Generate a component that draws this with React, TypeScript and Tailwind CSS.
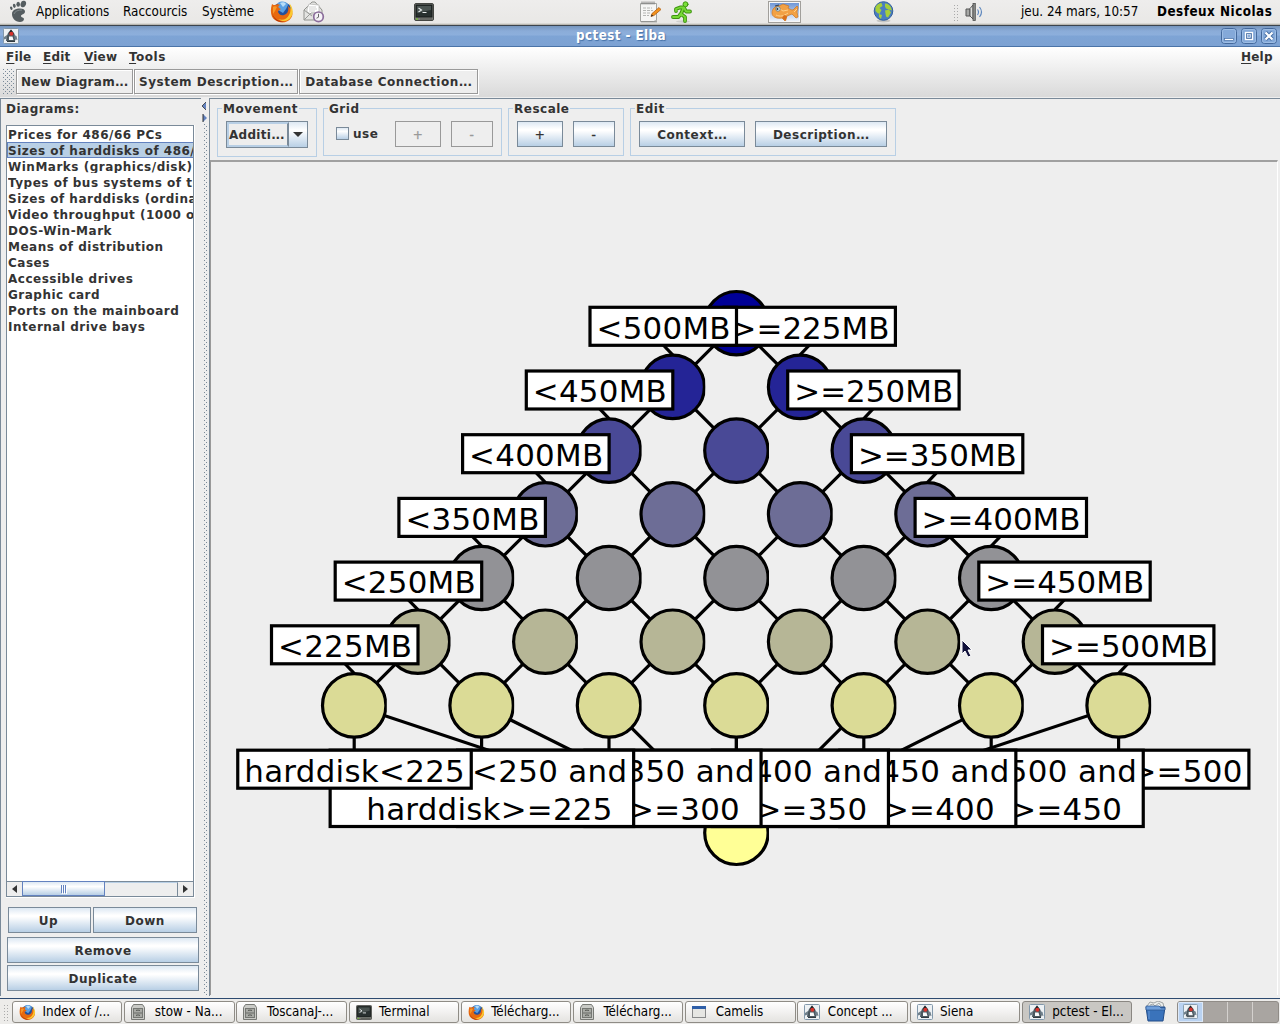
import React from "react";

const panelFont = "font-['DejaVu_Sans_Condensed','DejaVu_Sans',sans-serif] [font-stretch:condensed] text-[13.33px] text-black whitespace-pre";
const javaFont = "font-['DejaVu_Sans',sans-serif] font-bold text-[12px] tracking-[0.5px] text-[#333333] whitespace-pre";
const metal = "bg-[linear-gradient(#dde8f3_0%,#ffffff_30%,#ffffff_36%,#b8cfe5_100%)] border border-[#7a8a99]";

function Firefox({ s }: { s: number }) {
  return (
    <svg width={s} height={s} viewBox="0 0 24 24" className="shrink-0">
      <circle cx="12.5" cy="11.500" r="9.600" fill="#24509c" />
      <path d="M8 3c4-3 9-1 10 2l-2 4-3 4-5-3z" fill="#5aa0e4" />
      <path d="M10 3c2-1 5-1 6 1l-3 3z" fill="#b7dcf8" />
      <path d="M2 4c1 1 2 1 3 1 2-1 4-1 5 0-2 1-2 2-1 3l2 1-3 2c0 3 3 5 6 4 4-1 5-5 4-9 4 3 6 8 3 12-3 5-11 6-16 2C1 18-.3 11 2 4z" fill="#e8690e" />
      <path d="M3 7c1-1 3-1 4 0l-2 4-2 3z" fill="#f79a2a" />
      <path d="M19 3c4 4 5 10 2 14-3 5-9 5-13 2 5 2 9 0 11-4 2-3 2-8 0-12z" fill="#fbc830" />
      <path d="M2 12c1 6 6 10 12 9-4 2-11 0-12-9z" fill="#a52b0c" />
    </svg>
  );
}

function Duke({ s }: { s: number }) {
  return (
    <svg width={s} height={s} viewBox="0 0 16 16" className="shrink-0">
      <rect x=".5" y=".5" width="15" height="15" rx="1" fill="#edf1f4" stroke="#8298ab" />
      <path d="M8 1.500 5 5 3.500 9 3 13h9l1-3-2-5z" fill="#4b5860" />
      <path d="M8 1.500 6 5l3 2 2-1z" fill="#1d2225" />
      <path d="M6 8.500h3.500l1 3.500H6z" fill="#f8f9fa" />
      <path d="m4 7-3 2v2.500l3-1zM11 7l2.500 1 1 4-3-1z" fill="#6f7f8a" />
      <path d="M4 13.500h8" stroke="#303940" />
      <circle cx="8.400" cy="5.800" r="2" fill="#d8322c" />
    </svg>
  );
}

function TerminalIcon({ w, h }: { w: number; h: number }) {
  return (
    <svg width={w} height={h} viewBox="0 0 20 18" preserveAspectRatio="none" className="shrink-0">
      <rect x=".5" y=".5" width="19" height="17" rx="1.500" fill="#7b7d78" stroke="#444642" />
      <rect x="2" y="2" width="16" height="12" fill="#28302f" stroke="#161b1a" />
      <path d="M3 3h14v4L3 10z" fill="#4a5351" />
      <path d="m4.500 5 3 2-3 2M8.500 9.500h4" fill="none" stroke="#e9eeee" strokeWidth="1.100" />
      <path d="M2 16h2" stroke="#72d11d" />
      <path d="M6 16h12" stroke="#555752" />
    </svg>
  );
}

function Cabinet() {
  return (
    <svg width="14" height="16" viewBox="0 0 14 16" className="shrink-0">
      <path d="M2.500.5h9l2 3v12H.5v-12z" fill="#c9cac6" stroke="#777975" />
      <rect x="2.500" y="4.500" width="9" height="9" fill="#a8aaa5" stroke="#757773" />
      <path d="M3 9h8" stroke="#6a6c68" />
      <path d="M5.500 7V6.200h3V7M5.500 11.800V11h3v.8" fill="none" stroke="#555753" />
    </svg>
  );
}

function WindowIcon() {
  return (
    <svg width="14" height="12" viewBox="0 0 14 12" className="shrink-0">
      <rect x=".5" y=".5" width="13" height="11" fill="#e6e6e3" stroke="#88898a" />
      <path d="M0 0h14v3H0z" fill="#2f5fa8" />
    </svg>
  );
}

function Foot() {
  return (
    <svg width="18" height="22" viewBox="0 0 18 22">
      <g fill="#555d60">
        <ellipse cx="14.300" cy="4" rx="2.700" ry="3.300" transform="rotate(18 14.300 4)" />
        <ellipse cx="9.200" cy="4.200" rx="1.800" ry="2.500" />
        <ellipse cx="5.300" cy="5.800" rx="1.400" ry="2.100" transform="rotate(-12 5.300 5.800)" />
        <ellipse cx="2.300" cy="8.200" rx="1.200" ry="1.800" transform="rotate(-20 2.300 8.200)" />
        <path d="M3 14c0-4 4-5.500 8-5.500 3 0 5 1 5 3 0 3-4 2.500-4 4.500s3 1 3 3c0 2-2 3-4 3-5 0-8-4-8-8z" />
      </g>
      <path d="M5 14c1-3 4-4 8-4" fill="none" stroke="#7f888b" />
    </svg>
  );
}

function Mail() {
  return (
    <svg width="22" height="22" viewBox="0 0 22 22">
      <path d="M1 9 9 1h3l7 8v10H1z" fill="#e4e4e2" stroke="#92938f" />
      <path d="M4 8 6 3l10 1v7l-6 3-6-3z" fill="#fff" stroke="#b9b9b6" strokeWidth=".8" />
      <path d="M6 6h7M6 8h8M6 10h6" stroke="#c5c5c3" strokeWidth=".8" />
      <path d="m1 19 7-7 5 0M1 9l8 6" fill="none" stroke="#999a97" />
      <circle cx="15.500" cy="15.800" r="4.800" fill="#f5f2f7" stroke="#8b6d9b" strokeWidth="1.700" />
      <path d="M15.500 12.800v3.400l-2 1" fill="none" stroke="#666" />
    </svg>
  );
}

function Note() {
  return (
    <svg width="22" height="22" viewBox="0 0 22 22">
      <path d="M1.500 2.500h16v17l-3 1h-13z" fill="#f6f6f5" stroke="#a3a4a1" />
      <path d="M2 20.800h16" stroke="#8c8d8a" />
      <path d="M3 .5v3M5 .5v3M7 .5v3M9 .5v3M11 .5v3M13 .5v3M15 .5v3" stroke="#777" strokeWidth=".9" />
      <path d="M4 7h9M4 9.500h10M4 12h7M4 14.500h6" stroke="#b5b6b4" strokeDasharray="3 1" />
      <path d="m12 15.500 1-3 7-6 2 2-7 6z" fill="#f3921d" stroke="#a95508" strokeWidth=".7" />
      <path d="m12 15.500.7-2 1.500 1.300z" fill="#222" />
    </svg>
  );
}

function Runner() {
  return (
    <svg width="21" height="22" viewBox="0 0 21 22">
      <ellipse cx="12" cy="20.500" rx="7" ry="1.200" fill="#cfcfcc" />
      <g fill="none" strokeLinecap="round" strokeLinejoin="round">
        <path d="M5 10V8l4-1.500h4l2 4h4M12 8l-2 5 4 3v4M9.500 13l-2 3H2" stroke="#3f9410" strokeWidth="3.800" />
        <circle cx="14.500" cy="3.300" r="2.500" fill="#7be03a" stroke="#3f9410" />
        <path d="M5 10V8l4-1.500h4l2 4h4M12 8l-2 5 4 3v4M9.500 13l-2 3H2" stroke="#76da36" strokeWidth="1.800" />
      </g>
    </svg>
  );
}

function Fish() {
  return (
    <svg width="33" height="22" viewBox="0 0 33 22">
      <defs>
        <linearGradient id="sea" x1="0" y1="0" x2="0" y2="1">
          <stop stopColor="#7097d6" />
          <stop offset="1" stopColor="#edf3fb" />
        </linearGradient>
      </defs>
      <rect x=".5" y=".5" width="32" height="21" fill="#f7f7f7" stroke="#a19f9b" />
      <rect x="2" y="2" width="29" height="18" fill="url(#sea)" />
      <path d="M4 12c0-4 3-7 7-7l4-2 6 2-1 2c2 1 3 2 5 2l4-4 1 1-1 5 1 5-2 1-4-4-5 2-2 5-3-3c-5 1-10-1-10-5z" fill="#f2a145" stroke="#c97625" strokeWidth=".7" />
      <path d="M8 14c4 2 8 1 12-2M12 8l3 2 5-1M26 11l3-3" fill="none" stroke="#ffd08a" />
      <path d="m14 17 2-3 3 1-1 5z" fill="#d9711c" />
      <circle cx="10" cy="8" r="2.200" fill="#e8f0f4" stroke="#446c86" strokeWidth=".7" />
      <circle cx="9.500" cy="8" r="1" fill="#1c3346" />
      <path d="m7 5 4-1" stroke="#2b3d52" />
    </svg>
  );
}

function Globe() {
  return (
    <svg width="21" height="22" viewBox="0 0 21 22">
      <ellipse cx="10.500" cy="19.800" rx="7" ry="1.600" fill="#c5c5c2" />
      <circle cx="10.500" cy="10" r="9.300" fill="#4a7dc0" stroke="#33609c" />
      <path d="M2.500 6c2-3 4-4 6-4l1 3-3 2 2 2-2 4-2-1-2-2zM12 2.500c3 0 5 2 6 4l1 3-3-1-3-1-1-2zM12 9.500l4-1 2 3-3 5-2-1zM6 13l3 1-1 4-2-2z" fill="#a6cf39" />
    </svg>
  );
}

function Speaker() {
  return (
    <svg width="19" height="20" viewBox="0 0 19 20">
      <path d="M1 7h4v7H1z" fill="#a7a8a6" stroke="#555" />
      <path d="M5 6.500 8 3v14l-3-3z" fill="#dfe0de" stroke="#555" />
      <rect x="8" y="1.500" width="2.300" height="17" fill="#8c8d8b" stroke="#4e4f4e" strokeWidth=".8" />
      <path d="M12.500 7.500q2 2.500 0 5.500M14.500 5q4 5 0 10" fill="none" stroke="#5f88be" strokeWidth="1.200" />
    </svg>
  );
}

function Trash() {
  return (
    <svg width="21" height="21" viewBox="0 0 21 21">
      <path d="M2 5 5 1l4 1 4-2 5 2 1 5H2z" fill="#eceeed" stroke="#8c9090" strokeWidth=".8" />
      <path d="m5 4 3-1 2 2 4-3 2 3" fill="none" stroke="#a5aaaa" />
      <path d="M1 6h19l-2 14H3z" fill="#3a73bb" stroke="#234d88" />
      <path d="M1 5h13l2 2h4v2H1z" fill="#6f9fdb" stroke="#28558f" strokeWidth=".7" />
      <path d="M4 10v8" stroke="#6497d6" />
    </svg>
  );
}

function TopPanel() {
  return (
    <div className={`flex h-[26px] shrink-0 items-start border-b border-[#3b444d] bg-[linear-gradient(#eeedec,#e9e8e6_92%,#aaa79f)] ${panelFont}`}>
      <div className="ml-[9px] w-[27px]"><Foot /></div>
      <span className="w-[87px] leading-[24px]">Applications</span>
      <span className="w-[79px] leading-[24px]">Raccourcis</span>
      <span className="w-[68px] leading-[24px]">Système</span>
      <div className="w-[33px]"><Firefox s={24} /></div>
      <div className="w-[111px] pt-px"><Mail /></div>
      <div className="w-[225px] pt-[3px]"><TerminalIcon w={20} h={18} /></div>
      <div className="w-[32px] pt-px"><Note /></div>
      <div className="w-[97px] pt-px"><Runner /></div>
      <div className="w-[105px] pt-px"><Fish /></div>
      <div className="w-[80px] pt-px"><Globe /></div>
      <div className="mt-1 mr-[7px] h-[17px] w-[5px] bg-[radial-gradient(#aaa_0.7px,transparent_0.8px)] bg-[length:3px_3px]" />
      <div className="w-[53px] pt-[2px]"><Speaker /></div>
      <span className="w-[138px] pl-[3px] leading-[24px]">jeu. 24 mars, 10:57</span>
      <span className="pl-px font-bold leading-[24px] tracking-[0.5px]">Desfeux Nicolas</span>
    </div>
  );
}

function WinButton({ children }: { children: React.ReactNode }) {
  return (
    <svg width="16" height="16" viewBox="0 0 16 16">
      <rect x=".5" y=".5" width="15" height="15" rx="3" fill="#84a9d9" stroke="#44699c" />
      <rect x="1.500" y="1.500" width="13" height="13" rx="2" fill="none" stroke="#9dbde4" />
      {children}
    </svg>
  );
}

function TitleBar() {
  return (
    <div className="flex h-[21px] shrink-0 items-center border-b border-[#4b74a8] bg-[linear-gradient(#7595bd,#8bacd8_25%,#8dafdc_45%,#7ea4d5_50%,#7da2d3)] pl-[3px] pr-[3px]">
      <Duke s={16} />
      <div className="grow pl-[2px] text-center font-['DejaVu_Sans_Condensed','DejaVu_Sans',sans-serif] text-[13.33px] leading-[20px] font-bold tracking-[0.4px] text-white [font-stretch:condensed] [text-shadow:1px_1px_1px_#4672a8]">
        pctest - Elba
      </div>
      <div className="flex gap-1">
        <WinButton><rect x="3.500" y="10.500" width="9" height="2" fill="#fff" stroke="#476fa5" strokeWidth=".7" /></WinButton>
        <WinButton>
          <rect x="4.500" y="4.500" width="7" height="7" fill="#476fa5" stroke="#fff" strokeWidth="1.300" />
          <rect x="6.500" y="6.500" width="3" height="3" fill="#8bacd8" stroke="#e1ebf8" strokeWidth=".7" />
        </WinButton>
        <WinButton>
          <path d="m4.500 4.500 7 7m0-7-7 7" stroke="#476fa5" strokeWidth="4" />
          <path d="m4.500 4.500 7 7m0-7-7 7" stroke="#fff" strokeWidth="2.200" />
        </WinButton>
      </div>
    </div>
  );
}

function MenuItem({ text, w }: { text: string; w: string }) {
  return (
    <span className={`${w} leading-[20px]`}>
      <span className="underline decoration-1 underline-offset-2">{text[0]}</span>
      {text.slice(1)}
    </span>
  );
}

function Dotted({ text }: { text: string }) {
  return (
    <span className="pt-px">
      {text}
      <span className="tracking-[-0.2px]">...</span>
    </span>
  );
}

function ToolButton({ label, w }: { label: string; w: string }) {
  return (
    <div className={`${w} flex h-[25px] items-center justify-center border border-[#999] bg-[#eeeeee] shadow-[inset_1px_1px_0_#fff,1px_1px_0_#fff]`}>
      <Dotted text={label} />
    </div>
  );
}

function MenuAndTools() {
  return (
    <div className={`flex h-[51px] shrink-0 flex-col border-b border-[#eeeeee] bg-[linear-gradient(#ffffff,#dadada_98%)] ${javaFont}`}>
      <div className="flex h-[22px] pl-[6px]">
        <MenuItem text="File" w="w-[37px] tracking-[0.2px]" />
        <MenuItem text="Edit" w="w-[41px] tracking-[0.2px]" />
        <MenuItem text="View" w="w-[45px] tracking-[0.2px]" />
        <MenuItem text="Tools" w="w-[60px]" />
        <span className="grow" />
        <MenuItem text="Help" w="w-[39px] tracking-[0.2px]" />
      </div>
      <div className="flex gap-px pl-[3px]">
        <div className="mr-px h-[26px] w-[11px] bg-[radial-gradient(circle_at_0.5px_0.5px,#7a8a99_0.6px,transparent_0.7px),radial-gradient(circle_at_0.5px_0.5px,#7a8a99_0.6px,transparent_0.7px)] bg-[length:4px_4px] bg-[position:0_0,2px_2px]" />
        <ToolButton label="New Diagram" w="w-[117px] tracking-[0.3px]" />
        <ToolButton label="System Description" w="w-[164px]" />
        <ToolButton label="Database Connection" w="w-[179px]" />
      </div>
    </div>
  );
}

const diagrams = [
  "Prices for 486/66 PCs",
  "Sizes of harddisks of 486/66",
  "WinMarks (graphics/disk)",
  "Types of bus systems of the PCs",
  "Sizes of harddisks (ordinal)",
  "Video throughput (1000 of chars)",
  "DOS-Win-Mark",
  "Means of distribution",
  "Cases",
  "Accessible drives",
  "Graphic card",
  "Ports on the mainboard",
  "Internal drive bays",
];

function Sidebar() {
  return (
    <div className={`flex w-[201px] flex-col border-l border-t border-[#7a8a99] bg-[#eeeeee] pl-[5px] ${javaFont}`}>
      <div className="h-[26px] leading-[20px]">Diagrams:</div>
      <div className="flex h-[773px] w-[189px] flex-col border-r border-b border-white">
        <div className="flex h-[772px] w-[188px] flex-col border border-[#7a8a99] bg-white">
          <div className="grow overflow-hidden">
            {diagrams.map((d, i) => (
              <div
                key={d}
                className={
                  i === 1
                    ? "h-4 overflow-hidden border border-r-0 border-[#6382bf] bg-[#b8cfe5] leading-[16px]"
                    : "h-4 overflow-hidden border border-r-0 border-transparent leading-[16px]"
                }
              >
                {d}
              </div>
            ))}
          </div>
          <div className="flex h-[15px] border-t border-[#7a8a99] bg-[#eeeeee]">
            <div className="flex w-[15px] items-center justify-center">
              <svg width="5" height="8" viewBox="0 0 5 8"><path d="M5 0v8L0 4z" fill="#333" /></svg>
            </div>
            <div className="-mt-px flex h-[15px] w-[83px] items-center justify-center gap-px border border-[#6382bf] bg-[linear-gradient(#dde8f3,#fff_35%,#b8cfe5)]">
              <span className="h-2 w-px bg-[#6382bf] shadow-[1px_1px_0_#fff]" />
              <span className="h-2 w-px bg-[#6382bf] shadow-[1px_1px_0_#fff]" />
              <span className="h-2 w-px bg-[#6382bf] shadow-[1px_1px_0_#fff]" />
            </div>
            <div className="w-[73px] border-r border-t border-r-[#7a8a99] border-t-[#b8cfe5]" />
            <div className="flex grow items-center justify-center">
              <svg width="5" height="8" viewBox="0 0 5 8"><path d="M0 0v8l5-4z" fill="#333" /></svg>
            </div>
          </div>
        </div>
      </div>
      <div className="mt-[9px] flex gap-[2px] pl-[2px]">
        <div className={`flex h-[26px] w-[83px] items-center justify-center pt-[2px] pr-[2px] ${metal}`}>Up</div>
        <div className={`flex h-[26px] w-[104px] items-center justify-center pt-[2px] ${metal}`}>Down</div>
      </div>
      <div className={`mt-1 ml-px flex h-[26px] w-[192px] items-center justify-center pt-[2px] ${metal}`}>Remove</div>
      <div className={`mt-[2px] ml-px flex h-[26px] w-[192px] items-center justify-center pt-[2px] ${metal}`}>Duplicate</div>
    </div>
  );
}

function Divider() {
  return (
    <div className="flex w-2 flex-col items-start bg-[#eeeeee]">
      <svg width="8" height="26" viewBox="0 0 8 26">
        <path d="M5 4v8L1 8z" fill="#6382bf" />
        <path d="M5 4 1 8l4 4" fill="none" stroke="#333" strokeWidth=".8" />
        <path d="M2 16v8l4-4z" fill="#6382bf" />
        <path d="M2 16v8" stroke="#333" />
      </svg>
      <div className="ml-[3px] w-[4px] grow bg-[radial-gradient(circle_at_0.5px_0.5px,#7a8a99_0.6px,transparent_0.7px),radial-gradient(circle_at_0.5px_0.5px,#7a8a99_0.6px,transparent_0.7px)] bg-[length:4px_4px] bg-[position:0_0,2px_2px]" />
    </div>
  );
}

function Group({ title, className, children }: { title: string; className: string; children: React.ReactNode }) {
  return (
    <fieldset className={`${className} border border-[#b8cfe5] pl-[8px]`}>
      <legend className="-ml-[4px] h-[18px] px-px leading-[20px]">{title}</legend>
      <div className="flex pt-[4px]">{children}</div>
    </fieldset>
  );
}

function Btn({ label, w, off, dots }: { label: string; w: string; off?: boolean; dots?: boolean }) {
  return (
    <div className={`${w} flex h-[26px] items-center justify-center ${off ? "border border-[#999] text-[#999]" : metal}`}>
      {dots ? <Dotted text={label} /> : <span className="pt-[2px] font-normal [-webkit-text-stroke:0.3px]">{label}</span>}
    </div>
  );
}

function ControlBar() {
  return (
    <div className={`flex h-[61px] shrink-0 gap-[6px] pl-[7px] ${javaFont}`}>
      <Group title="Movement" className="h-[58px] w-[100px]">
        <div className="flex h-[27px] w-[82px] border border-[#7a8a99]">
          <div className="w-[62px] border-2 border-[#b8cfe5] border-r-[#7a8a99] leading-[22px] tracking-[0.3px]"><Dotted text="Additi" /></div>
          <div className="flex grow items-center justify-center bg-[linear-gradient(#dde8f3,#fff_33%,#b8cfe5)]">
            <svg width="10" height="5" viewBox="0 0 10 5"><path d="M0 0h10L5 5z" fill="#333" /></svg>
          </div>
        </div>
      </Group>
      <Group title="Grid" className="h-[57px] w-[179px]">
        <div className="mt-[6px] ml-[4px] h-[13px] w-[13px] border border-[#7a8a99] bg-[linear-gradient(#dde8f3,#fff_30%,#b8cfe5)]" />
        <div className="w-[46px] pl-[4px] leading-[26px]">use</div>
        <Btn label="+" w="mr-[10px] w-[46px]" off />
        <Btn label="-" w="w-[42px]" off />
      </Group>
      <Group title="Rescale" className="h-[57px] w-[116px]">
        <Btn label="+" w="mr-[10px] w-[46px]" />
        <Btn label="-" w="w-[42px]" />
      </Group>
      <Group title="Edit" className="h-[57px] w-[266px]">
        <Btn label="Context" w="mr-[10px] w-[106px]" dots />
        <Btn label="Description" w="w-[132px]" dots />
      </Group>
    </div>
  );
}

const CX = 736.4;
const STEP = 63.7;
const rowY = (r: number) => 323.2 + r * STEP;
const nodeX = (r: number, i: number) => CX + (2 * i - r) * STEP;
const rowFill = ["#000096", "#242496", "#494996", "#6d6d96", "#929296", "#b6b696", "#dbdb96"];

const lefts = ["<500MB", "<450MB", "<400MB", "<350MB", "<250MB", "<225MB"];
const rights = [">=225MB", ">=250MB", ">=350MB", ">=400MB", ">=450MB", ">=500MB"];
const objects: [string, string][] = [
  ["harddisk<225", ""],
  ["harddisk<250 and", "harddisk>=225"],
  ["harddisk<350 and", "harddisk>=300"],
  ["harddisk<400 and", "harddisk>=350"],
  ["harddisk<450 and", "harddisk>=400"],
  ["harddisk<500 and", "harddisk>=450"],
  ["harddisk>=500", ""],
];

function Disc({ x, y, fill }: { x: number; y: number; fill: string }) {
  return (
    <svg x={x - 35} y={y - 35} width={67.6} height={70} viewBox="0 0 67.6 70" overflow="hidden">
      <circle cx="35" cy="35" r="31.700" fill={fill} stroke="#000" strokeWidth="3.200" />
    </svg>
  );
}

function AttrLabel({ x, y, w, text }: { x: number; y: number; w: number; text: string }) {
  return (
    <g>
      <rect x={x + 1} y={y + 1.300} width={w - 2} height={38} fill="#fff" stroke="#000" strokeWidth="3.200" />
      <text x={x + 7.500} y={y + 32.600} textLength={w - 14.500}>{text}</text>
    </g>
  );
}

function Diagram() {
  const edges: React.ReactNode[] = [];
  const discs: React.ReactNode[] = [];
  for (let r = 0; r < 7; r++) {
    for (let i = 0; i <= r; i++) {
      const x = nodeX(r, i);
      const y = rowY(r);
      discs.push(<Disc key={`${r}-${i}`} x={x} y={y} fill={rowFill[r]} />);
      if (r < 6) {
        edges.push(<path key={`${r}-${i}`} d={`M${x} ${y}l${-STEP} ${STEP}M${x} ${y}l${STEP} ${STEP}`} />);
      } else {
        edges.push(<path key={`b${i}`} d={`M${x} ${y}L${CX} ${rowY(8)}`} />);
      }
    }
  }
  return (
    <svg width="1066" height="834" viewBox="211 162 1066 834" className="block" fontFamily="DejaVu Sans, sans-serif" fontSize="30.900">
      <g stroke="#000" strokeWidth="3.200">{edges}</g>
      {discs}
      <Disc x={CX} y={rowY(8)} fill="#ffff96" />
      <g stroke="#000" strokeWidth="3.200">
        {lefts.map((t, i) => (
          <g key={t}>
            <path d={`M${nodeX(i + 1, 0)} ${rowY(i + 1) - 32}L${663.2 - i * STEP} ${345 + i * STEP}`} />
            <path d={`M${nodeX(i + 1, i + 1)} ${rowY(i + 1) - 32}L${809.5 + i * STEP} ${345 + i * STEP}`} />
          </g>
        ))}
        {objects.map((o, i) => (
          <path key={o[0]} d={`M${nodeX(6, i)} ${rowY(6) + 32}V751`} />
        ))}
      </g>
      {rights.map((t, i) => (
        <AttrLabel key={t} x={723 + i * STEP} y={306 + i * STEP} w={173.400} text={t} />
      ))}
      {lefts.map((t, i) => (
        <AttrLabel key={t} x={589 - i * STEP} y={306 + i * STEP} w={148.500} text={t} />
      ))}
      {objects
        .map(([a, b], i) => {
          const w = b ? 305.500 : i === 0 ? 235.500 : 262;
          const x = nodeX(6, i) - w / 2 + 0.300;
          return (
            <g key={a}>
              <rect x={x + 1} y={750.200} width={w - 2} height={b ? 76.300 : 38} fill="#fff" stroke="#000" strokeWidth="3.200" />
              <text x={x + 7.500} y="782" textLength={w - 15}>{a}</text>
              {b && <text x={x + 37.200} y="820" textLength="246">{b}</text>}
            </g>
          );
        })
        .reverse()}
      <path d="M962 640v14l3-3 3 6 3-1-3-6h4z" fill="#10103a" stroke="#fff" strokeWidth="1" />
    </svg>
  );
}

function TaskBar() {
  const duke = <Duke s={16} />;
  const tasks: [string, React.ReactNode][] = [
    ["Index of /...", <Firefox s={17} />],
    ["stow - Na...", <Cabinet />],
    ["ToscanaJ-...", <Cabinet />],
    ["Terminal", <TerminalIcon w={16} h={15} />],
    ["Télécharg...", <Firefox s={17} />],
    ["Télécharg...", <Cabinet />],
    ["Camelis", <WindowIcon />],
    ["Concept ...", duke],
    ["Siena", duke],
    ["pctest - El...", duke],
  ];
  return (
    <div className={`flex h-[26px] shrink-0 items-start border-t border-[#2d4a70] bg-[#edecea] pt-[2px] ${panelFont}`}>
      <div className="mt-[3px] ml-[3px] mr-[4px] h-[17px] w-[5px] bg-[radial-gradient(#aaa_0.7px,transparent_0.8px)] bg-[length:3px_3px]" />
      <div className="flex gap-[1.800px]">
        {tasks.map(([t, icon], i) => (
          <div
            key={i}
            className={`flex h-[22px] w-[110.400px] items-center rounded-[3px] border pl-[6px] ${
              i === 9 ? "border-[#8a8782] bg-[#c9c7c3]" : "border-[#8f8c86] bg-[linear-gradient(#ffffff,#f2f1f0_50%,#e4e3e0)]"
            }`}
          >
            <div className="flex w-[23.500px]">{icon}</div>
            <span className="leading-[20px]">{t}</span>
          </div>
        ))}
      </div>
      <div className="ml-[13px] w-[32px]"><Trash /></div>
      <div className="flex h-[22px] w-[102px] overflow-hidden rounded-[3px] border border-[#908c87] bg-[#a9a5a1]">
        <div className="flex w-[25px] items-start justify-center border border-[#dce8f7] bg-[#b9d2f1] pt-px"><Duke s={15} /></div>
        <div className="w-[25px] border-r border-[#d4d1ce]" />
        <div className="w-[25px] border-r border-[#d4d1ce]" />
      </div>
    </div>
  );
}

export default function App() {
  return (
    <div className="flex h-[1024px] w-[1280px] flex-col overflow-hidden bg-[#eeeeee]">
      <TopPanel />
      <TitleBar />
      <MenuAndTools />
      <div className="mb-[2px] flex h-[898px] shrink-0">
        <Sidebar />
        <Divider />
        <div className="flex grow flex-col border-l border-t border-[#7a8a99] bg-[#eeeeee]">
          <ControlBar />
          <div className="mr-[2px] h-[835px] overflow-hidden border-l border-t-2 border-r border-r-white border-l-[#999] border-t-[#a0a0a0]">
            <Diagram />
          </div>
        </div>
      </div>
      <TaskBar />
    </div>
  );
}
